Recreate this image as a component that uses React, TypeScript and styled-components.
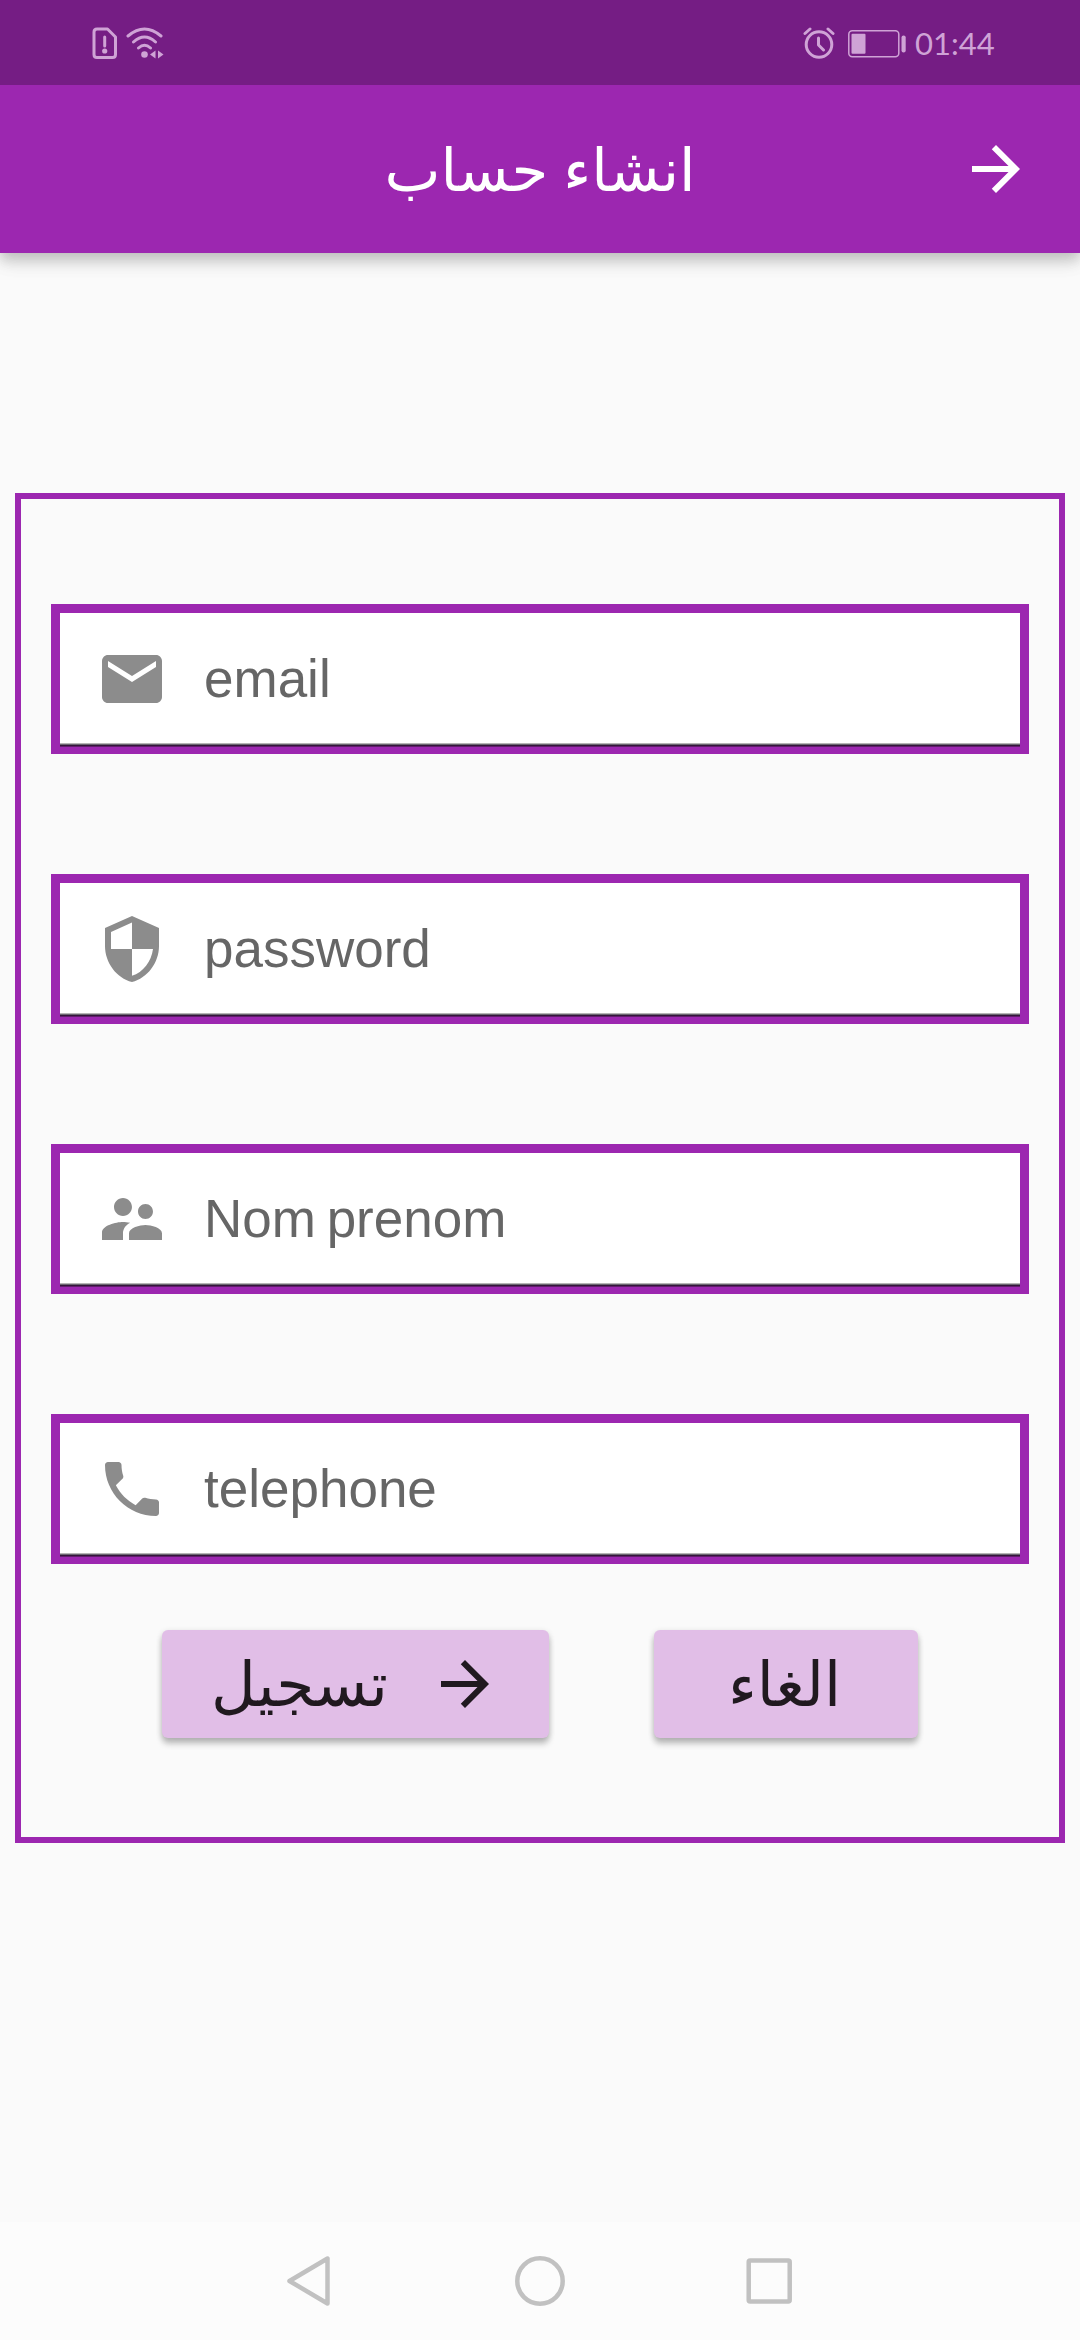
import React from "react";
import styled, { createGlobalStyle } from "styled-components";

const purple = "#9c27b0";

const GlobalStyle = createGlobalStyle`
  * { box-sizing: border-box; }
  body { margin: 0; background: #fafafa; }
`;

const Screen = styled.div`
  width: 1080px;
  height: 2340px;
  display: flex;
  flex-direction: column;
  background: #fafafa;
  overflow: hidden;
`;

const StatusBar = styled.header`
  height: 85px;
  flex: none;
  display: flex;
  align-items: center;
  justify-content: space-between;
  padding: 1px 86px 0 92px;
  background: #751d84;
  color: #cfa3d6;
`;

const StatusGroup = styled.div<{ $gap: number }>`
  display: flex;
  align-items: center;
  gap: ${(p) => p.$gap}px;
`;

const Clock = styled.time`
  font: 400 31px/36px Lato, sans-serif;
  width: 79px;
  margin-left: -4px;
  white-space: nowrap;
`;

const AppBar = styled.div`
  height: 168px;
  flex: none;
  display: grid;
  grid-template-columns: 120px 1fr 120px;
  align-items: center;
  background: ${purple};
  color: #fff;
  box-shadow: 0 6px 12px rgba(0, 0, 0, 0.14), 0 12px 15px rgba(0, 0, 0, 0.06),
    0 3px 24px rgba(0, 0, 0, 0.1);
  clip-path: inset(0 0 -60px 0);
`;

const Title = styled.h1`
  grid-column: 2;
  margin: 0;
  padding-top: 3px;
  text-align: center;
  font: 400 59.5px/80px "DejaVu Sans", sans-serif;
  word-spacing: -4px;
`;

const Icon = styled.svg`
  width: 72px;
  height: 72px;
  flex: none;
  display: block;
  fill: currentColor;
`;

const Form = styled.main`
  margin: 240px 15px 0;
  height: 1350px;
  flex: none;
  border: 6px solid ${purple};
  padding: 105px 30px 0;
  display: flex;
  flex-direction: column;
`;

const Fields = styled.div`
  display: flex;
  flex-direction: column;
  gap: 120px;
`;

const Field = styled.label`
  height: 150px;
  border: 9px solid ${purple};
  border-bottom-width: 7px;
  padding: 0 0 2px 36px;
  display: flex;
  align-items: center;
  gap: 36px;
  background: #fff;
  color: #8c8c8c;
  box-shadow: inset 0 -1px 0 #5f1f6b, inset 0 -2px 0 #35153c,
    inset 0 -3px 0 #6b6470, inset 0 -4px 0 #b5b5b5;
`;

const Hint = styled.span`
  font: 400 53px/60px "Liberation Sans", Arial, sans-serif;
  color: #666;
  word-spacing: -4px;
`;

const Actions = styled.div`
  display: flex;
  gap: 105px;
  padding: 66px 111px 0;
`;

const Button = styled.button<{ $width: number; $align?: string }>`
  width: ${(p) => p.$width}px;
  height: 108px;
  border: 0;
  border-radius: 6px;
  padding: 0 48px 0 49px;
  display: flex;
  align-items: center;
  justify-content: ${(p) => p.$align ?? "center"};
  background: #e1bee7;
  color: #20191f;
  font: 400 61.5px/80px "DejaVu Sans", sans-serif;
  box-shadow: 0 6px 6px rgba(0, 0, 0, 0.2), 0 2px 6px rgba(0, 0, 0, 0.16);
`;

const ButtonLabel = styled.span`
  padding: 1px 4px 0 0;
  white-space: nowrap;
`;

const NavBar = styled.nav`
  height: 118px;
  flex: none;
  margin-top: auto;
  display: flex;
  justify-content: space-between;
  align-items: center;
  padding: 0 284px;
  background: #fcfcfc;
  color: #c1c1c1;
`;

const paths = {
  arrow: "M12 4l-1.41 1.41L16.17 11H4v2h12.17l-5.58 5.59L12 20l8-8z",
  mail: "M20 4H4c-1.1 0-1.99.9-1.99 2L2 18c0 1.1.9 2 2 2h16c1.1 0 2-.9 2-2V6c0-1.1-.9-2-2-2zm0 4l-8 5-8-5V6l8 5 8-5v2z",
  shield:
    "M12 1L3 5v6c0 5.55 3.84 10.74 9 12 5.16-1.26 9-6.45 9-12V5l-9-4zm0 10.99h7c-.53 4.12-3.28 7.79-7 8.94V12H5V6.3l7-3.11v8.8z",
  people:
    "M16.5 12c1.38 0 2.49-1.12 2.49-2.5S17.88 7 16.5 7C15.12 7 14 8.12 14 9.5s1.12 2.5 2.5 2.5zM9 11c1.66 0 2.99-1.34 2.99-3S10.66 5 9 5C7.34 5 6 6.34 6 8s1.34 3 3 3zm7.5 3c-1.83 0-5.5.92-5.5 2.75V19h11v-2.25c0-1.83-3.67-2.75-5.5-2.75zM9 13c-2.33 0-7 1.17-7 3.5V19h7v-2.25c0-.85.33-2.34 2.37-3.47C10.5 13.1 9.66 13 9 13z",
  phone:
    "M6.62 10.79c1.44 2.83 3.76 5.14 6.59 6.59l2.2-2.2c.27-.27.67-.36 1.02-.24 1.12.37 2.33.57 3.57.57.55 0 1 .45 1 1V20c0 .55-.45 1-1 1-9.39 0-17-7.61-17-17 0-.55.45-1 1-1h3.5c.55 0 1 .45 1 1 0 1.25.2 2.45.57 3.57.11.35.03.74-.25 1.02l-2.2 2.2z",
};

type IconName = keyof typeof paths;

const Glyph = ({ name }: { name: IconName }) => (
  <Icon viewBox="0 0 24 24">
    <path d={paths[name]} />
  </Icon>
);

const fields: { icon: IconName; hint: string }[] = [
  { icon: "mail", hint: "email" },
  { icon: "shield", hint: "password" },
  { icon: "people", hint: "Nom prenom" },
  { icon: "phone", hint: "telephone" },
];

const SimAlert = () => (
  <svg width="26" height="34" viewBox="0 0 26 34" fill="none" stroke="currentColor" strokeWidth="3">
    <path d="M5 3h10.5l8 8v17.500q0 3-3 3H5q-3 0-3-3V6q0-3 3-3z" strokeLinejoin="round" />
    <path d="M12.700 11v9" strokeLinecap="round" />
    <circle cx="12.700" cy="25" r="2.600" fill="currentColor" stroke="none" />
  </svg>
);

const Wifi = () => (
  <svg width="38" height="34" viewBox="0 0 38 34" fill="none" stroke="currentColor" strokeWidth="3" strokeLinecap="round">
    <path d="M2 10Q18.500-4 35 10M7.500 16Q18.500 6 29.500 16M12.500 22Q18.500 16.500 24.500 22" />
    <circle cx="18.500" cy="28.500" r="3.300" fill="currentColor" stroke="none" />
    <path d="M24 28.500l5.500-4v8zM32 24.500l5.500 4-5.500 4z" fill="currentColor" stroke="none" />
  </svg>
);

const Alarm = () => (
  <svg width="32" height="34" viewBox="0 0 32 34" fill="none" stroke="currentColor" strokeWidth="3">
    <circle cx="16" cy="18.500" r="12.800" />
    <path d="M2 7.500l5-4.500M30 7.500l-5-4.500M15.500 12v7l5 5" strokeLinecap="round" strokeLinejoin="round" />
  </svg>
);

const Battery = () => (
  <svg width="58" height="34" viewBox="0 0 58 34" fill="none">
    <rect x="0.800" y="4.800" width="50" height="26" rx="3.500" stroke="currentColor" strokeWidth="1.500" />
    <rect x="3.500" y="7.700" width="14" height="20" rx="1" fill="currentColor" />
    <rect x="53.500" y="9.500" width="4.200" height="17" rx="2" fill="currentColor" />
  </svg>
);

const Back = () => (
  <svg width="54" height="54" viewBox="0 0 54 54" fill="none" stroke="currentColor" strokeWidth="4.500" strokeLinejoin="round">
    <path d="M5.500 27L43.500 4.500v45z" />
  </svg>
);

const Home = () => (
  <svg width="54" height="54" viewBox="0 0 54 54" fill="none" stroke="currentColor" strokeWidth="4.500">
    <circle cx="27" cy="27" r="22.700" />
  </svg>
);

const Recents = () => (
  <svg width="54" height="54" viewBox="0 0 54 54" fill="none" stroke="currentColor" strokeWidth="4.500">
    <rect x="6.700" y="6.500" width="41" height="41" rx="1.500" />
  </svg>
);

export default function App() {
  return (
    <>
      <GlobalStyle />
      <Screen>
        <StatusBar>
          <StatusGroup $gap={8}>
            <SimAlert />
            <Wifi />
          </StatusGroup>
          <StatusGroup $gap={13}>
            <Alarm />
            <Battery />
            <Clock>01:44</Clock>
          </StatusGroup>
        </StatusBar>
        <AppBar>
          <Title dir="rtl">انشاء حساب</Title>
          <Glyph name="arrow" />
        </AppBar>
        <Form>
          <Fields>
            {fields.map((f) => (
              <Field key={f.hint}>
                <Glyph name={f.icon} />
                <Hint>{f.hint}</Hint>
              </Field>
            ))}
          </Fields>
          <Actions>
            <Button $width={387} $align="space-between">
              <ButtonLabel>تسجيل</ButtonLabel>
              <Glyph name="arrow" />
            </Button>
            <Button $width={264}>
              <ButtonLabel>الغاء</ButtonLabel>
            </Button>
          </Actions>
        </Form>
        <NavBar>
          <Back />
          <Home />
          <Recents />
        </NavBar>
      </Screen>
    </>
  );
}
